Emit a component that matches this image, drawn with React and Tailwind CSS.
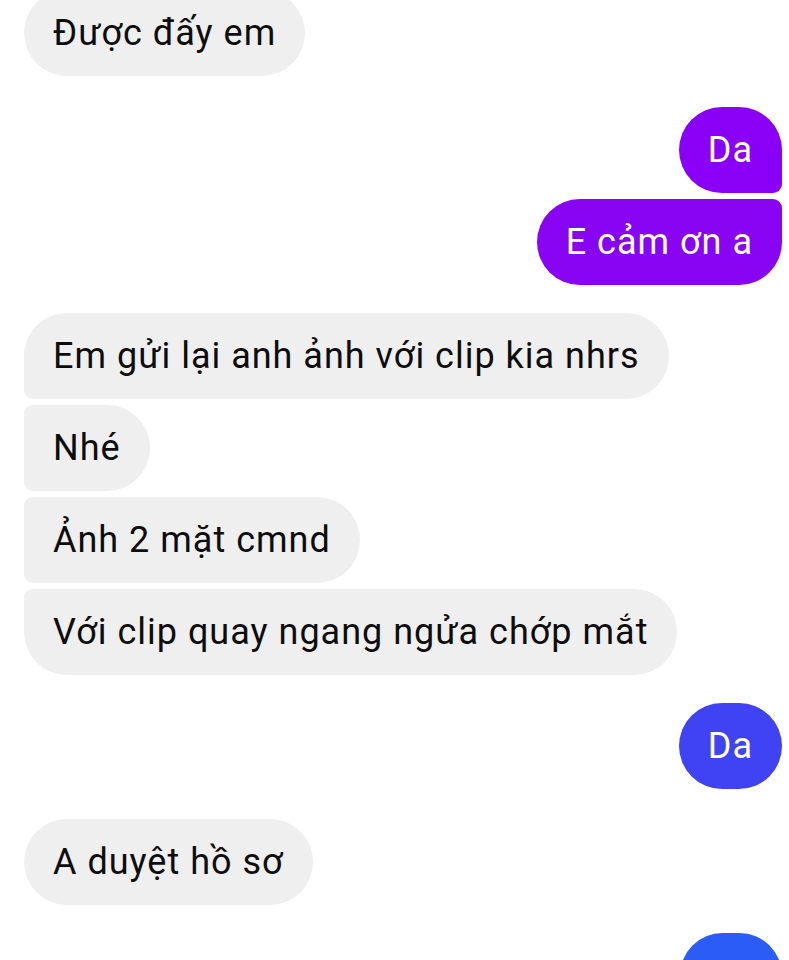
export default function App() {
  const font = { fontFamily: 'Roboto, "Noto Sans", sans-serif' };
  const base = "h-[86px] flex items-center px-[29px] text-[36px] tracking-[1px] leading-none whitespace-nowrap";
  const gray = base + " bg-[#efefef] text-[#0d0d0d]";
  return (
    <div className="w-[789px] h-[960px] overflow-hidden bg-white" style={font}>
      <div className="flex flex-col pl-[24px] pr-[7px] -mt-[10px]">
        <div className="self-start">
          <div className={gray + " rounded-[43px]"}>Được đấy em</div>
        </div>

        <div className="self-end mt-[31px] flex flex-col items-end gap-[6px]">
          <div className={base + " h-[85px] bg-[#8a00f6] text-white rounded-t-[43px] rounded-bl-[43px] rounded-br-[9px]"}>Da</div>
          <div className={base + " h-[85px] bg-[#8a04f4] text-white rounded-l-[43px] rounded-tr-[9px] rounded-br-[43px]"}>E cảm ơn a</div>
        </div>

        <div className="self-start mt-[28px] flex flex-col items-start gap-[6px]">
          <div className={gray + " rounded-r-[43px] rounded-tl-[43px] rounded-bl-[9px]"}>Em gửi lại anh ảnh với clip kia nhrs</div>
          <div className={gray + " rounded-r-[43px] rounded-l-[9px]"}>Nhé</div>
          <div className={gray + " rounded-r-[43px] rounded-l-[9px]"}>Ảnh 2 mặt cmnd</div>
          <div className={gray + " rounded-r-[43px] rounded-tl-[9px] rounded-bl-[43px]"}>Với clip quay ngang ngửa chớp mắt</div>
        </div>

        <div className="self-end mt-[28px]">
          <div className={base + " h-[85px] bg-[#4043f4] text-white rounded-[43px]"}>Da</div>
        </div>

        <div className="self-start mt-[30px]">
          <div className={gray + " h-[85px] rounded-[43px]"}>A duyệt hồ sơ</div>
        </div>

        <div className="self-end mt-[28px]">
          <div className="h-[85px] w-[102px] bg-[#2b5cf6] rounded-[43px]"></div>
        </div>
      </div>
    </div>
  );
}
